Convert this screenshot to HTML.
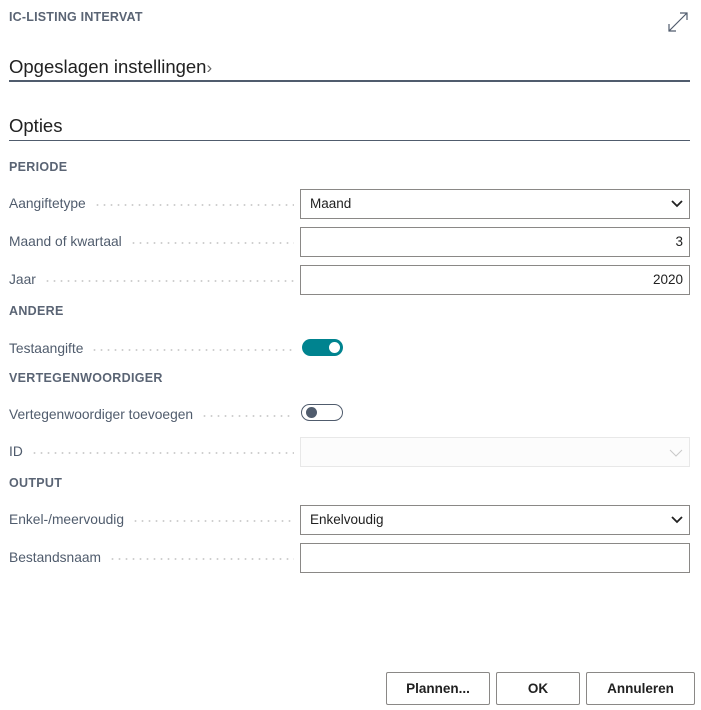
<!DOCTYPE html><html><head><style>
body{margin:0;width:701px;height:710px;background:#fff;font-family:"Liberation Sans",sans-serif;color:#212121;position:relative;overflow:hidden}
.a{position:absolute}
.lbl{position:absolute;left:9px;font-size:13.8px;color:#505c6d;width:285px;display:flex;align-items:center}
.lbl span{white-space:nowrap;padding-right:8px}
.lbl i{flex:1;height:2px;margin-top:3px;background:radial-gradient(circle,#cfcfcf 0.9px,transparent 1.1px) 0 0/7px 2px repeat-x}
.h{position:absolute;left:9px;font-size:12.5px;font-weight:bold;color:#5a6474;letter-spacing:.3px}
.box{position:absolute;left:300px;width:388px;height:28px;border:1px solid #8a8886;font-size:13.5px;line-height:28px;box-sizing:content-box}
.btn{position:absolute;top:672px;height:31px;border:1px solid #8a8886;border-radius:2px;font-size:13.5px;font-weight:bold;text-align:center;line-height:31px;color:#212121}
</style></head><body>
<div class="a" style="left:9px;top:10px;font-size:12.5px;color:#5a6474;font-weight:bold;letter-spacing:.2px">IC-LISTING INTERVAT</div>
<svg class="a" style="left:667px;top:11px" width="22" height="22" viewBox="0 0 22 22" fill="none" stroke="#505c6d" stroke-width="1.2"><path d="M2 20L20 2M13 2h7v7M2 13v7h7"/></svg>
<div class="a" style="left:9px;top:56px;font-size:18.5px;color:#212121">Opgeslagen instellingen<span style="color:#666;font-size:17px">›</span></div>
<div class="a" style="left:9px;top:80px;width:681px;height:2px;background:#505c6d"></div>
<div class="a" style="left:9px;top:115px;font-size:18.5px">Opties</div>
<div class="a" style="left:9px;top:140px;width:681px;height:1px;background:#505c6d"></div>
<div class="h" style="top:160px">PERIODE</div>
<div class="lbl" style="top:196px"><span>Aangiftetype</span><i></i></div>
<div class="box" style="top:189px;text-indent:9px">Maand<svg class="a" style="right:6px;top:10px" width="12" height="8" viewBox="0 0 12 8"><path d="M1 1l5 5 5-5" stroke="#212121" stroke-width="1.8" fill="none"/></svg></div>
<div class="lbl" style="top:234px"><span>Maand of kwartaal</span><i></i></div>
<div class="box" style="top:227px;text-align:right;padding-right:0"><span style="padding-right:6px">3</span></div>
<div class="lbl" style="top:272px"><span>Jaar</span><i></i></div>
<div class="box" style="top:265px;text-align:right"><span style="padding-right:6px">2020</span></div>
<div class="h" style="top:304px">ANDERE</div>
<div class="lbl" style="top:341px"><span>Testaangifte</span><i></i></div>
<div class="a" style="left:302px;top:339px;width:41px;height:17px;border-radius:9px;background:#00838f"></div>
<div class="a" style="left:329px;top:342px;width:11px;height:11px;border-radius:50%;background:#fff"></div>
<div class="h" style="top:371px">VERTEGENWOORDIGER</div>
<div class="lbl" style="top:407px"><span>Vertegenwoordiger toevoegen</span><i></i></div>
<div class="a" style="left:301px;top:404px;width:40px;height:15px;border-radius:9px;border:1px solid #505c6d"></div>
<div class="a" style="left:306px;top:407px;width:11px;height:11px;border-radius:50%;background:#505c6d"></div>
<div class="lbl" style="top:444px"><span>ID</span><i></i></div>
<div class="box" style="top:437px;border-color:#e8e8e8;background:#fcfcfc"><svg class="a" style="right:6px;top:11px" width="14" height="8" viewBox="0 0 14 8"><path d="M1 1l6 6 6-6" stroke="#c8c8c8" stroke-width="1" fill="none"/></svg></div>
<div class="h" style="top:476px">OUTPUT</div>
<div class="lbl" style="top:512px"><span>Enkel-/meervoudig</span><i></i></div>
<div class="box" style="top:505px;text-indent:9px">Enkelvoudig<svg class="a" style="right:6px;top:10px" width="12" height="8" viewBox="0 0 12 8"><path d="M1 1l5 5 5-5" stroke="#212121" stroke-width="1.8" fill="none"/></svg></div>
<div class="lbl" style="top:550px"><span>Bestandsnaam</span><i></i></div>
<div class="box" style="top:543px"></div>
<div class="btn" style="left:386px;width:102px">Plannen...</div>
<div class="btn" style="left:496px;width:82px">OK</div>
<div class="btn" style="left:586px;width:107px">Annuleren</div>
</body></html>
